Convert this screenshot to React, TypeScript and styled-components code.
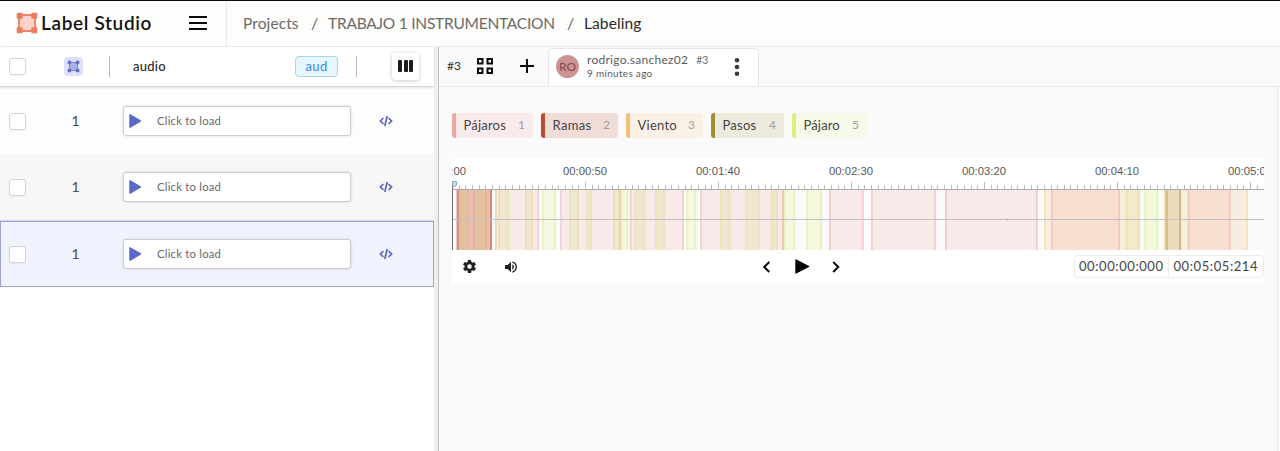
import React from "react";
import styled, { createGlobalStyle } from "styled-components";

const GlobalStyle = createGlobalStyle`
  * { box-sizing: border-box; }
  body { margin: 0; font-family: Lato, "Open Sans", sans-serif; background: #fafafa; overflow: hidden; }
  svg { display: block; flex: none; }
`;

const Page = styled.div`
  height: 451px;
  width: 1280px;
  display: flex;
  flex-direction: column;
  border-top: 1px solid #0f0d12;
`;

const Text = styled.span<{ size: number; color: string; ls?: number; weight?: number; lh?: number }>`
  font-size: ${(p) => p.size}px;
  color: ${(p) => p.color};
  letter-spacing: ${(p) => p.ls ?? 0}px;
  font-weight: ${(p) => p.weight ?? 400};
  line-height: ${(p) => p.lh ?? 20}px;
  white-space: nowrap;
  display: block;
`;

const TopBar = styled.header`
  height: 46px;
  flex: none;
  display: flex;
  background: #fdfdfc;
  border-bottom: 1px solid #ebebea;
`;

const Brand = styled.div`
  width: 227px;
  display: flex;
  align-items: center;
  padding: 0 0 1px 16px;
  border-right: 1px solid #e8e8e7;
`;

const BrandName = styled.div`
  width: 148px;
  padding-left: 3px;
`;

const Crumbs = styled.nav`
  display: flex;
  align-items: center;
  padding: 0 0 1px 16px;
`;

const Crumb = styled.div<{ w: number }>`
  width: ${(p) => p.w}px;
  flex: none;
`;

const Body = styled.div`
  flex: 1;
  display: flex;
  min-height: 0;
`;

const TaskList = styled.section`
  width: 434px;
  background: #fff;
  flex: none;
`;

const Splitter = styled.div`
  width: 5px;
  flex: none;
  background: #efefee;
  border-right: 1px solid #bdbdc0;
`;

const Row = styled.div<{ tone: string; selected: boolean }>`
  height: ${(p) => (p.selected ? 67 : 66)}px;
  display: flex;
  align-items: center;
  padding-left: 9px;
  background: ${(p) => p.tone};
  border-top: ${(p) => (p.selected ? "1px solid #d3d5ec" : "0")};
  box-shadow: ${(p) => (p.selected ? "inset 0 0 0 1px #9da2d4" : "none")};
`;

const HeadRow = styled.div`
  height: 40px;
  margin-bottom: 1px;
  display: flex;
  align-items: center;
  padding: 0 0 1px 9px;
  background: #fff;
  border-bottom: 1px solid #d4d4d4;
  box-shadow: 0 1px 2px #0000001c;
  position: relative;
`;

const CheckBox = styled.div`
  width: 17px;
  height: 17px;
  flex: none;
  border: 1px solid #d3d3d5;
  border-radius: 3px;
  background: #fff;
  box-shadow: 0 1px 1px #0000000a;
`;

const Cell = styled.div<{ w: number; justify?: string }>`
  width: ${(p) => p.w}px;
  flex: none;
  display: flex;
  align-items: center;
  justify-content: ${(p) => p.justify ?? "flex-start"};
`;

const RegionBadge = styled.div`
  width: 19px;
  height: 19px;
  border-radius: 4px;
  background: #dce0f8;
  display: flex;
  align-items: center;
  justify-content: center;
`;

const Divider = styled.div`
  width: 1px;
  height: 21px;
  background: #b9b9bc;
`;

const TypeTag = styled.div`
  width: 43px;
  height: 21px;
  border: 1px solid #a4d5f2;
  border-radius: 4px;
  background: #e6f6ff;
  display: flex;
  align-items: center;
  justify-content: center;
`;

const ColumnsButton = styled.div`
  width: 27px;
  height: 27px;
  border-radius: 4px;
  background: #fff;
  box-shadow: 0 1px 4px #00000038;
  display: flex;
  align-items: center;
  justify-content: center;
  gap: 1.5px;
`;

const ColumnBar = styled.i`
  width: 4px;
  height: 12px;
  border-radius: 1px;
  background: #1b1b1d;
`;

const Player = styled.div`
  width: 228px;
  height: 30px;
  flex: none;
  border: 1px solid #cdcdcf;
  border-radius: 3px;
  background: #fff;
  box-shadow: 0 0 3px #00000022;
  display: flex;
  align-items: center;
  padding-left: 5px;
  gap: 16px;
`;

const Editor = styled.main`
  flex: 1;
  min-width: 0;
  background: #fafafa;
`;

const TabBar = styled.div`
  height: 40px;
  display: flex;
  align-items: center;
  padding-left: 8px;
  border-bottom: 1px solid #ebebeb;
`;

const Tool = styled(Cell)`
  padding-bottom: 1px;
`;

const Tab = styled.div`
  width: 211px;
  height: 38px;
  align-self: flex-end;
  display: flex;
  align-items: center;
  padding: 0 0 2px 7px;
  background: #fff;
  border: 1px solid #e6e6e6;
  border-bottom: 0;
  border-radius: 5px 5px 0 0;
`;

const Avatar = styled.div`
  width: 23px;
  height: 23px;
  border-radius: 50%;
  background: #cc9391;
  display: flex;
  align-items: center;
  justify-content: center;
  flex: none;
`;

const TabInfo = styled.div`
  width: 140px;
  padding-left: 8px;
  display: flex;
  flex-direction: column;
`;

const TabTitle = styled.div`
  display: flex;
  height: 14px;
  gap: 8px;
`;

const Content = styled.div`
  height: 365px;
  width: 839px;
  padding: 26px 0 0 13px;
  border-right: 1px solid #ebebeb;
`;

const Labels = styled.div`
  display: flex;
  height: 25px;
  gap: 8px;
`;

const Label = styled.div<{ w: number; bar: string; fill: string }>`
  width: ${(p) => p.w}px;
  display: flex;
  align-items: center;
  justify-content: space-between;
  padding: 0 8px 1px 7.5px;
  border-left: 4px solid ${(p) => p.bar};
  border-radius: 3px;
  background: ${(p) => p.fill};
`;

const AudioPanel = styled.div`
  margin-top: 20px;
  width: 812px;
  height: 126px;
  background: #fff;
`;

const Controls = styled.div`
  height: 34px;
  display: flex;
  align-items: center;
  padding: 0 0 1px 10.5px;
`;

const TimeBox = styled.div`
  width: 190px;
  height: 23px;
  display: flex;
  border: 1px solid #ededed;
  border-radius: 4px;
`;

const Time = styled.div<{ w: number; split?: boolean }>`
  width: ${(p) => p.w}px;
  padding-left: 4.5px;
  border-right: ${(p) => (p.split ? "1px solid #ededed" : "0")};
`;

const LogoMark = () => (
  <svg width="22" height="22" viewBox="0 0 22 22">
    <rect x="3" y="3" width="16" height="16" fill="#fbd3c8" stroke="#ec8466" strokeWidth="2" />
    {[[0.7, 0.7], [15.3, 0.7], [0.7, 15.3], [15.3, 15.3]].map(([x, y]) => (
      <rect key={`${x}-${y}`} x={x} y={y} width="6" height="6" rx="1" fill="#e97d5f" />
    ))}
  </svg>
);

const MenuIcon = () => (
  <svg width="18" height="14" viewBox="0 0 18 14" stroke="#0c0c0e" strokeWidth="2">
    <path d="M0 1H18M0 7H18M0 13H18" />
  </svg>
);

const RegionIcon = () => (
  <svg width="13" height="13" viewBox="0 0 13 13">
    <rect x="2.5" y="2.5" width="8" height="8" fill="#a9b1e6" stroke="#7f89d3" />
    {[[2.5, 2.5], [10.5, 2.5], [2.5, 10.5], [10.5, 10.5]].map(([x, y]) => (
      <circle key={`${x}-${y}`} cx={x} cy={y} r="2" fill="#6670c4" />
    ))}
  </svg>
);

const BluePlay = () => (
  <svg width="12" height="14" viewBox="0 0 12 14">
    <path d="M1 0.8L11.3 7L1 13.2Z" fill="#5a6ac8" stroke="#5a6ac8" strokeWidth="1.5" strokeLinejoin="round" />
  </svg>
);

const CodeIcon = () => (
  <svg width="14" height="12" viewBox="0 0 14 12" fill="none" stroke="#5b66bd" strokeWidth="1.7">
    <path d="M4.4 3L1.4 6L4.4 9M9.6 3L12.6 6L9.6 9M8.2 1L5.8 11" />
  </svg>
);

const GridIcon = () => (
  <svg width="16" height="16" viewBox="0 0 16 16" fill="none" stroke="#0b0b0b" strokeWidth="2">
    <path d="M1 1H5.5V5.5H1ZM10.5 1H15V5.5H10.5ZM1 10.5H5.5V15H1ZM10.5 10.5H15V15H10.5Z" />
  </svg>
);

const PlusIcon = () => (
  <svg width="14" height="14" viewBox="0 0 14 14" stroke="#0b0b0b" strokeWidth="2">
    <path d="M7 0V14M0 7H14" />
  </svg>
);

const DotsIcon = () => (
  <svg width="6" height="18" viewBox="0 0 6 18" fill="#3a3a3c">
    <circle cx="3" cy="2.3" r="2.3" />
    <circle cx="3" cy="9" r="2.3" />
    <circle cx="3" cy="15.7" r="2.3" />
  </svg>
);

const GearIcon = () => (
  <svg width="13" height="13" viewBox="2 2 20 20" fill="#1f1f21">
    <path d="M19.43 12.98c.04-.32.07-.64.07-.98s-.03-.66-.07-.98l2.11-1.65c.19-.15.24-.42.12-.64l-2-3.46c-.12-.22-.39-.3-.61-.22l-2.49 1c-.52-.4-1.08-.73-1.69-.98l-.38-2.65A.49.49 0 0 0 14 2h-4c-.25 0-.46.18-.49.42l-.38 2.65c-.61.25-1.17.59-1.69.98l-2.49-1c-.23-.09-.49 0-.61.22l-2 3.46c-.13.22-.07.49.12.64l2.11 1.65c-.04.32-.07.65-.07.98s.03.66.07.98l-2.11 1.65c-.19.15-.24.42-.12.64l2 3.46c.12.22.39.3.61.22l2.49-1c.52.4 1.08.73 1.69.98l.38 2.65c.03.24.24.42.49.42h4c.25 0 .46-.18.49-.42l.38-2.65c.61-.25 1.17-.59 1.69-.98l2.49 1c.23.09.49 0 .61-.22l2-3.46c.12-.22.07-.49-.12-.64l-2.11-1.65zM12 15.5a3.5 3.5 0 1 1 0-7 3.5 3.5 0 0 1 0 7z" />
  </svg>
);

const VolumeIcon = () => (
  <svg width="12" height="12" viewBox="3 3 18 18" fill="#1f1f21">
    <path d="M3 9v6h4l5 5V4L7 9H3zm13.5 3A4.5 4.5 0 0 0 14 7.97v8.05c1.48-.73 2.5-2.25 2.5-4.02zM14 3.23v2.06c2.89.86 5 3.54 5 6.71s-2.11 5.85-5 6.71v2.06c4.01-.91 7-4.49 7-8.77s-2.99-7.86-7-8.77z" />
  </svg>
);

const Chevron = ({ right }: { right?: boolean }) => (
  <svg width="8" height="12" viewBox="0 0 8 12" fill="none" stroke="#0b0b0b" strokeWidth="2">
    <path d={right ? "M1.2 1L6.3 6L1.2 11" : "M6.3 1L1.2 6L6.3 11"} />
  </svg>
);

const PlayIcon = () => (
  <svg width="15" height="15" viewBox="0 0 15 15">
    <path d="M1 1L13.7 7.5L1 14Z" fill="#050505" stroke="#050505" strokeWidth="1.4" strokeLinejoin="round" />
  </svg>
);

const PINK = "#f8eae9";
const PINK_EDGE = "#f4cfce";
const OLIVE = "#f1e7d0";
const OLIVE_EDGE = "#ede3b9";
const GREEN = "#f3f8de";
const GREEN_EDGE = "#e8f3c1";
const CREAM = "#f8eee0";
const PEACH = "#f8dfd2";
const PEACH_EDGE = "#f4cabc";

// [start, end, fill, edge colour, edge width] along the 812px wide track
type Segment = [number, number, string, string?, number?];

const segments: Segment[] = [
  [4.7, 40, "#eabdb0", "#d48a7c", 2],
  [7, 16, "#e3c09f", "#dfb892", 1],
  [21, 35, "#e3c09f", "#dfb892", 2],
  [43, 87, PINK, PINK_EDGE, 1.7],
  [46, 57.3, OLIVE, OLIVE_EDGE, 2],
  [73, 81, OLIVE, OLIVE_EDGE, 2],
  [90, 104, GREEN, GREEN_EDGE, 2],
  [108.3, 168.7, PINK, PINK_EDGE, 1.7],
  [117, 127, OLIVE, OLIVE_EDGE, 2],
  [134, 140, OLIVE, OLIVE_EDGE, 2],
  [161, 168, OLIVE, OLIVE_EDGE, 2],
  [167, 168.7, "#ecccb8"],
  [169, 176.3, GREEN, GREEN_EDGE, 2],
  [178, 232, PINK, PINK_EDGE, 1.7],
  [182.5, 193.3, OLIVE, OLIVE_EDGE, 2],
  [203, 213, OLIVE, OLIVE_EDGE, 2],
  [234.3, 244.3, GREEN, GREEN_EDGE, 2],
  [248.3, 332, PINK, PINK_EDGE, 1.7],
  [268, 278.5, OLIVE, OLIVE_EDGE, 2],
  [293.5, 308, OLIVE, OLIVE_EDGE, 2],
  [318.7, 326, OLIVE, OLIVE_EDGE, 2],
  [330, 332, "#f0c7b4"],
  [332, 343.3, GREEN, GREEN_EDGE, 1.7],
  [354, 370, GREEN, GREEN_EDGE, 2],
  [377, 411.7, PINK, PINK_EDGE, 2],
  [419, 484, PINK, PINK_EDGE, 2],
  [493, 585.7, PINK, PINK_EDGE, 2],
  [592, 796, CREAM, "#f7e2bd", 2],
  [599, 668, PEACH, PEACH_EDGE, 2],
  [673.7, 688, "#f2eacb", "#ede4ae", 2.7],
  [688, 692, "#fafaf8"],
  [692, 706.5, GREEN, GREEN_EDGE, 2.5],
  [706.5, 712, "#fafaf8"],
  [712, 713.7, "#f3ddb4"],
  [713.7, 729, "#ebdcbe", "#cdb787", 2],
  [735.7, 778.7, PEACH, PEACH_EDGE, 2],
];

const marks = ["00:00:50", "00:01:40", "00:02:30", "00:03:20", "00:04:10", "00:05:00"];

const Waveform = () => (
  <svg width="812" height="92" viewBox="0 0 812 92">
    <g fontFamily="Liberation Sans, Arial, sans-serif" fontSize="11.3" fill="#58585c" textAnchor="middle">
      <text x="-8" y="17">00:00:00</text>
      {marks.map((m, i) => (
        <text key={m} x={133 * (i + 1)} y="17">{m}</text>
      ))}
    </g>
    <g fill="#bdbdbf">
      {Array.from({ length: 122 }, (_, i) => (
        <rect key={i} x={Math.round(i * 6.65)} y={i % 20 ? 27 : 24} width="1" height={i % 20 ? 4 : 7} />
      ))}
    </g>
    <rect x="0" y="32" width="812" height="60" fill="#fafafb" />
    {segments.map(([a, b, fill, edge, w], i) => (
      <g key={i}>
        <rect x={a} y="32" width={b - a} height="60" fill={fill} />
        {edge && <rect x={a} y="32" width={w} height="60" fill={edge} />}
        {edge && <rect x={b - w!} y="32" width={w} height="60" fill={edge} />}
      </g>
    ))}
    <rect x="0" y="31" width="812" height="1" fill="#aaaaac" />
    <rect x="0" y="61" width="812" height="1" fill="#c4bfc0" />
    <circle cx="555" cy="61.5" r="1" fill="#b5adae" />
    <rect x="0" y="27" width="1" height="65" fill="#6b6b6e" />
    <path d="M0.5 23.5H4.5V27L2.5 28.5H0.5Z" fill="#b9dcf0" stroke="#7d98a8" strokeWidth="0.8" />
  </svg>
);

const labels = [
  { name: "Pájaros", key: 1, w: 81, bar: "#f0a5a0", fill: "#f9ebeb", ls: 0.2 },
  { name: "Ramas", key: 2, w: 77, bar: "#c0492e", fill: "#f1ddd8", ls: 0.35 },
  { name: "Viento", key: 3, w: 77, bar: "#f5c075", fill: "#f9f1e6", ls: 0.25 },
  { name: "Pasos", key: 4, w: 73, bar: "#a48a36", fill: "#edeadd", ls: 0.25 },
  { name: "Pájaro", key: 5, w: 75, bar: "#d9f07a", fill: "#f5f9e8", ls: 0.15 },
];

const rows = [
  { tone: "#fdfdfd", selected: false },
  { tone: "#f8f7f5", selected: false },
  { tone: "#f0f3fd", selected: true },
];

export default function App() {
  return (
    <Page>
      <GlobalStyle />
      <TopBar>
        <Brand>
          <LogoMark />
          <BrandName><Text size={19} color="#141416" weight={600} ls={0.65}>Label Studio</Text></BrandName>
          <Cell w={24} justify="center"><MenuIcon /></Cell>
        </Brand>
        <Crumbs>
          <Crumb w={68}><Text size={15.5} color="#6d6a66" ls={0.1}>Projects</Text></Crumb>
          <Crumb w={17}><Text size={16} color="#6d6a66">/</Text></Crumb>
          <Crumb w={239}><Text size={15.5} color="#6d6a66" ls={-0.24}>TRABAJO 1 INSTRUMENTACION</Text></Crumb>
          <Crumb w={17}><Text size={16} color="#6d6a66">/</Text></Crumb>
          <Crumb w={70}><Text size={15.5} color="#2a2927" ls={0.1}>Labeling</Text></Crumb>
        </Crumbs>
      </TopBar>
      <Body>
        <TaskList>
          <HeadRow>
            <Cell w={55}><CheckBox /></Cell>
            <Cell w={45}><RegionBadge><RegionIcon /></RegionBadge></Cell>
            <Cell w={24}><Divider /></Cell>
            <Cell w={162}><Text size={13} color="#2a2a2c" weight={500} ls={0.25}>audio</Text></Cell>
            <Cell w={61}><TypeTag><Text size={13} color="#4b8fe0" weight={500} ls={0.3}>aud</Text></TypeTag></Cell>
            <Cell w={36}><Divider /></Cell>
            <ColumnsButton><ColumnBar /><ColumnBar /><ColumnBar /></ColumnsButton>
          </HeadRow>
          <div>
            {rows.map((r, i) => (
              <Row key={i} tone={r.tone} selected={r.selected}>
                <Cell w={55}><CheckBox /></Cell>
                <Cell w={59}><Cell w={23} justify="center"><Text size={14} color="#4a4a4c">1</Text></Cell></Cell>
                <Player><BluePlay /><Text size={11.3} color="#68686a" ls={0.22}>Click to load</Text></Player>
                <Cell w={70} justify="center"><CodeIcon /></Cell>
              </Row>
            ))}
          </div>
        </TaskList>
        <Splitter />
        <Editor>
          <TabBar>
            <Tool w={30}><Text size={12} color="#2f2f31">#3</Text></Tool>
            <Tool w={43}><GridIcon /></Tool>
            <Tool w={28}><PlusIcon /></Tool>
            <Tab>
              <Avatar><Text size={12} color="#7b4f50">RO</Text></Avatar>
              <TabInfo>
                <TabTitle>
                  <Text size={12} color="#5b5b5d" lh={13} ls={0.27}>rodrigo.sanchez02</Text>
                  <Text size={10.5} color="#6f6f71" lh={14}>#3</Text>
                </TabTitle>
                <Text size={10} color="#5a5a5c" lh={13} ls={0.3}>9 minutes ago</Text>
              </TabInfo>
              <Cell w={36} justify="center"><DotsIcon /></Cell>
            </Tab>
          </TabBar>
          <Content>
            <Labels>
              {labels.map((l) => (
                <Label key={l.key} w={l.w} bar={l.bar} fill={l.fill}>
                  <Text size={13} color="#454345" ls={l.ls}>{l.name}</Text>
                  <Text size={12} color="#a3a09f">{l.key}</Text>
                </Label>
              ))}
            </Labels>
            <AudioPanel>
              <Waveform />
              <Controls>
                <Cell w={42}><GearIcon /></Cell>
                <Cell w={258}><VolumeIcon /></Cell>
                <Cell w={32}><Chevron /></Cell>
                <Cell w={37}><PlayIcon /></Cell>
                <Cell w={242}><Chevron right /></Cell>
                <TimeBox>
                  <Time w={94.5} split><Text size={13} color="#434345" ls={0.58}>00:00:00:000</Text></Time>
                  <Time w={93}><Text size={13} color="#434345" ls={0.58}>00:05:05:214</Text></Time>
                </TimeBox>
              </Controls>
            </AudioPanel>
          </Content>
        </Editor>
      </Body>
    </Page>
  );
}
